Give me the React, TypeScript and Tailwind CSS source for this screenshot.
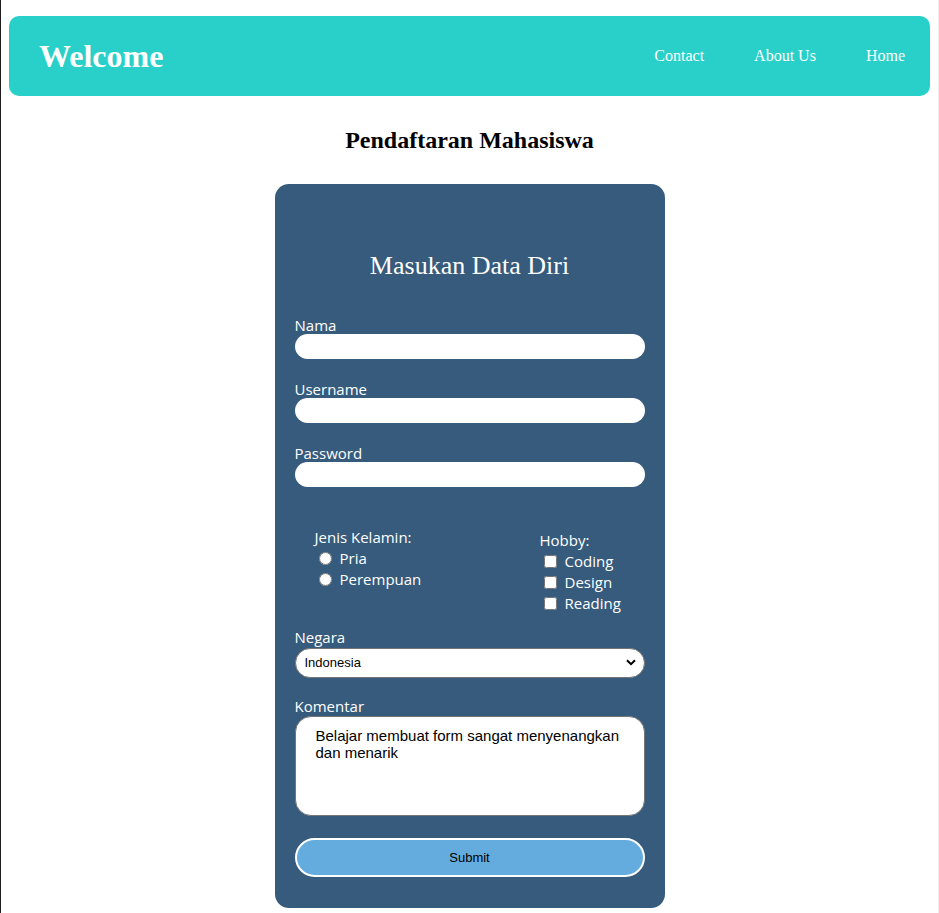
import { useState } from "react"

const serif = { fontFamily: '"Liberation Serif", "Times New Roman", serif' }

function Field({ label, type }: { label: string; type: string }) {
  return (
    <label className="flex flex-col">
      <span className="text-[15px] leading-[17px] text-white font-['Open_Sans',sans-serif]">{label}</span>
      <input type={type} className="h-[25px] w-full rounded-full bg-white px-3 text-sm outline-none" />
    </label>
  )
}

function App() {
  const [komentar, setKomentar] = useState('Belajar membuat form sangat menyenangkan dan menarik')

  return (
    <div className="min-h-screen w-full bg-white border-l border-l-[#1f1f1f] border-r border-r-[#ececec]">
      <header className="mx-2 pt-4">
        <div className="flex h-20 items-center justify-between rounded-[10px] bg-[#28d0c9] pl-[30px] pr-[25px]">
          <h1 className="text-[32px] font-bold text-white" style={serif}>Welcome</h1>
          <nav className="flex gap-[50px] text-[16px] text-white" style={serif}>
            <a href="#">Contact</a>
            <a href="#">About Us</a>
            <a href="#">Home</a>
          </nav>
        </div>
      </header>

      <h2 className="mt-[26px] text-center text-[24px] font-bold text-black" style={serif}>
        Pendaftaran Mahasiswa
      </h2>

      <form
        className="mx-auto mt-[26px] flex w-[390px] flex-col rounded-[14px] bg-[#365b7c] px-5 pb-[31px] pt-[66px] font-['Open_Sans',sans-serif]"
        onSubmit={(e) => e.preventDefault()}
      >
        <h3 className="mb-[35px] text-center text-[26px] leading-[32px] text-white" style={serif}>
          Masukan Data Diri
        </h3>

        <div className="flex flex-col gap-[22px]">
          <Field label="Nama" type="text" />
          <Field label="Username" type="text" />
          <Field label="Password" type="password" />
        </div>

        <div className="mt-[40px] grid grid-cols-[225px_1fr] pl-5 text-[15px] leading-[21px] text-white">
          <div className="flex flex-col">
            <span>Jenis Kelamin:</span>
            <label className="flex items-center gap-2 pl-1">
              <input type="radio" name="jk" className="h-[13px] w-[13px]" /> Pria
            </label>
            <label className="flex items-center gap-2 pl-1">
              <input type="radio" name="jk" className="h-[13px] w-[13px]" /> Perempuan
            </label>
          </div>
          <div className="flex flex-col pt-[3px]">
            <span>Hobby:</span>
            <label className="flex items-center gap-2 pl-1">
              <input type="checkbox" className="h-[13px] w-[13px]" /> Coding
            </label>
            <label className="flex items-center gap-2 pl-1">
              <input type="checkbox" className="h-[13px] w-[13px]" /> Design
            </label>
            <label className="flex items-center gap-2 pl-1">
              <input type="checkbox" className="h-[13px] w-[13px]" /> Reading
            </label>
          </div>
        </div>

        <label className="mt-[15px] flex flex-col">
          <span className="text-[15px] leading-[17px] text-white">Negara</span>
          <div className="relative mt-[2px]">
            <select className="h-[30px] w-full appearance-none rounded-full border border-[#767676] bg-white pl-[9px] pr-8 text-[13px] text-black font-['Liberation_Sans',sans-serif]">
              <option>Indonesia</option>
              <option>Malaysia</option>
              <option>Singapura</option>
            </select>
            <svg className="pointer-events-none absolute right-[9px] top-[11px]" width="10" height="7" viewBox="0 0 10 7" fill="none">
              <path d="M1 1.2l4 4 4-4" stroke="#000" strokeWidth="2" />
            </svg>
          </div>
        </label>

        <label className="mt-[20px] flex flex-col">
          <span className="text-[15px] leading-[17px] text-white">Komentar</span>
          <textarea
            value={komentar}
            onChange={(e) => setKomentar(e.target.value)}
            className="mt-[1px] h-[100px] w-full resize-none rounded-[16px] border border-[#767676] bg-white px-5 pb-[9px] pt-[10px] text-[15px] leading-[17px] text-black outline-none font-['Liberation_Sans',sans-serif]"
          />
        </label>

        <button
          type="submit"
          className="mt-[22px] h-[39px] w-full rounded-full border-2 border-white bg-[#65acde] text-[13px] text-black font-['Liberation_Sans',sans-serif]"
        >
          Submit
        </button>
      </form>
    </div>
  )
}

export default App
